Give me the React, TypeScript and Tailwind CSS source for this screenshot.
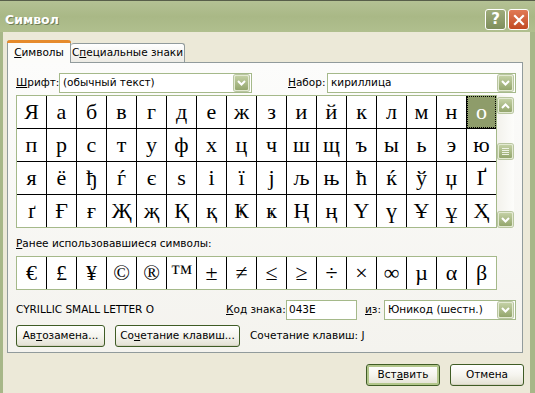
import React from "react";

const UI = "font-['DejaVu_Sans',sans-serif] text-[10.5px] text-black";
const SERIF = "font-['Liberation_Serif','DejaVu_Serif',serif]";

const rows: string[][] = [
  ["Я", "а", "б", "в", "г", "д", "е", "ж", "з", "и", "й", "к", "л", "м", "н", "о"],
  ["п", "р", "с", "т", "у", "ф", "х", "ц", "ч", "ш", "щ", "ъ", "ы", "ь", "э", "ю"],
  ["я", "ё", "ђ", "ѓ", "є", "ѕ", "і", "ї", "ј", "љ", "њ", "ћ", "ќ", "ў", "џ", "Ґ"],
  ["ґ", "Ғ", "ғ", "Җ", "җ", "Қ", "қ", "Ҝ", "ҝ", "Ң", "ң", "Ү", "ү", "Ұ", "ұ", "Ҳ"],
];

const recent = ["€", "£", "¥", "©", "®", "™", "±", "≠", "≤", "≥", "÷", "×", "∞", "µ", "α", "β"];

function Chevron({ up }: { up?: boolean }) {
  return (
    <svg width="9" height="6" viewBox="0 0 9 6">
      <path
        d={up ? "M1 5 L4.5 1.5 L8 5" : "M1 1 L4.5 4.5 L8 1"}
        fill="none"
        stroke="white"
        strokeWidth="2"
      />
    </svg>
  );
}

function GreenBtn({ up, w = 15, h = 16 }: { up?: boolean; w?: number; h?: number }) {
  return (
    <div
      className="rounded-[2px] border border-[#e3ead2] bg-linear-to-b from-[#c3d0a4] to-[#94a66d] flex items-center justify-center shadow-[0_0_0_1px_#b9c6a0]"
      style={{ width: w, height: h }}
    >
      <Chevron up={up} />
    </div>
  );
}

function Select({ text, w }: { text: string; w: number }) {
  return (
    <div
      className="h-[20px] border border-[#a5b98a] bg-white flex items-center pl-[3px] pr-[2px]"
      style={{ width: w }}
    >
      <span className="whitespace-nowrap">{text}</span>
      <div className="ml-auto">
        <GreenBtn />
      </div>
    </div>
  );
}

function XpButton({
  children,
  w,
  def,
}: {
  children: React.ReactNode;
  w: number;
  def?: boolean;
}) {
  return (
    <div
      className={
        "h-[22px] rounded-[3px] border border-[#3f5c25] bg-linear-to-b from-[#ffffff] via-[#f5f4ee] to-[#e3e1d3] flex items-center justify-center whitespace-nowrap " +
        (def ? "shadow-[inset_0_0_0_2px_#b3c78c]" : "shadow-[inset_0_-1px_0_#d6d3c2]")
      }
      style={{ width: w }}
    >
      {children}
    </div>
  );
}

export default function App() {
  return (
    <div className={"w-[535px] h-[393px] overflow-hidden flex flex-col bg-[#a7b788] " + UI}>
      {/* Title bar */}
      <div className="h-[32px] shrink-0 flex items-start border-t border-[#585e4a] bg-linear-to-b from-[#b4c194] via-[#a9b886] to-[#b0bf8e]">
        <div className="ml-[5px] mt-[12px] font-['DejaVu_Sans',sans-serif] font-bold text-[12.5px] leading-[14px] text-white [text-shadow:1px_1px_0_#6f7d55]">
          Символ
        </div>
        <div className="ml-auto mr-[6px] mt-[8px] flex gap-[2px]">
          <div className="w-[21px] h-[21px] rounded-[3px] border border-white bg-linear-to-b from-[#9fac7c] to-[#7f8e5c] flex items-center justify-center text-white font-bold text-[15px] font-['DejaVu_Sans',sans-serif] leading-none">
            ?
          </div>
          <div className="w-[21px] h-[21px] rounded-[3px] border border-white bg-linear-to-b from-[#e07a55] to-[#c24a22] flex items-center justify-center">
            <svg width="12" height="12" viewBox="0 0 12 12">
              <path d="M2 2 L10 10 M10 2 L2 10" stroke="white" strokeWidth="2.2" strokeLinecap="square" />
            </svg>
          </div>
        </div>
      </div>

      {/* Body */}
      <div className="flex-1 ml-[3px] mr-[5px] bg-[#ece9d8] flex flex-col">
        {/* Tabs */}
        <div className="mt-[8px] ml-[4px] flex items-end h-[22px]">
          <div className="relative z-10 w-[64px] h-[23px] -mb-px rounded-t-[3px] border-x border-[#919b9c] bg-[#fcfcfa] flex flex-col">
            <div className="h-[3px] -mx-px rounded-t-[3px] bg-[#e68b2c]" />
            <div className="flex-1 flex items-center justify-center pb-[1px]">
              <span>
                <span className="underline">С</span>имволы
              </span>
            </div>
          </div>
          <div className="w-[114px] h-[19px] rounded-t-[3px] border-t border-r border-[#919b9c] bg-linear-to-b from-[#ffffff] to-[#ecebe4] flex items-center justify-center">
            <span>
              С<span className="underline">п</span>ециальные знаки
            </span>
          </div>
        </div>

        {/* Panel */}
        <div className="ml-[4px] w-[516px] h-[291px] border border-[#919b9c] bg-linear-to-b from-[#fcfcfb] to-[#f4f3ee] flex flex-col pl-[8px]">
          {/* Font row */}
          <div className="mt-[10px] h-[20px] flex items-center">
            <span className="w-[43px]">
              <span className="underline">Ш</span>рифт:
            </span>
            <Select text="(обычный текст)" w={193} />
            <span className="ml-[36px] w-[39px]">
              <span className="underline">Н</span>абор:
            </span>
            <Select text="кириллица" w={189} />
          </div>

          {/* Grid + scrollbar */}
          <div className="mt-[2px] flex">
            <div className="border border-[#a5b98a] bg-black">
              <div className="grid grid-cols-16 gap-px">
                {rows.map((r, ri) =>
                  r.map((c, ci) => {
                    const sel = ri === 0 && ci === 15;
                    return (
                      <div
                        key={ri + "-" + ci}
                        className={
                          "w-[29px] h-[32px] flex items-center justify-center text-[22px] leading-none " +
                          SERIF +
                          (sel
                            ? " bg-[#8e9c6a] text-white outline-1 outline-dotted outline-black -outline-offset-1"
                            : " bg-white text-black")
                        }
                      >
                        {c}
                      </div>
                    );
                  })
                )}
              </div>
            </div>
            <div className="w-[17px] h-[133px] bg-linear-to-r from-[#f3f2ec] to-[#fdfdfb] flex flex-col items-center pt-[3px] pb-[1px]">
              <GreenBtn up w={15} h={15} />
              <div className="mt-[31px] w-[15px] h-[15px] rounded-[2px] border border-[#e3ead2] bg-linear-to-b from-[#c3d0a4] to-[#94a66d] flex flex-col items-center justify-center gap-[1px] shadow-[0_0_0_1px_#b9c6a0]">
                <div className="w-[7px] h-px bg-[#eef2e4]" />
                <div className="w-[7px] h-px bg-[#eef2e4]" />
                <div className="w-[7px] h-px bg-[#eef2e4]" />
                <div className="w-[7px] h-px bg-[#eef2e4]" />
              </div>
              <div className="mt-auto">
                <GreenBtn w={15} h={15} />
              </div>
            </div>
          </div>

          {/* Recent label */}
          <div className="mt-[9px] h-[13px] leading-[13px]">
            <span className="underline">Р</span>анее использовавшиеся символы:
          </div>

          {/* Recent box */}
          <div className="mt-[6px] self-start border border-[#a5b98a] bg-black">
            <div className="grid grid-cols-16 gap-px">
              {recent.map((c, i) => (
                <div
                  key={i}
                  className={
                    "w-[29px] h-[32px] flex items-center justify-center text-[22px] leading-none bg-white " +
                    SERIF
                  }
                >
                  {c}
                </div>
              ))}
            </div>
          </div>

          {/* Name / code row */}
          <div className="mt-[10px] h-[20px] flex items-center">
            <span className="w-[210px] whitespace-nowrap">CYRILLIC SMALL LETTER O</span>
            <span className="w-[60px] whitespace-nowrap">
              <span className="underline">К</span>од знака:
            </span>
            <div className="w-[71px] h-[20px] border border-[#a5b98a] bg-white flex items-center pl-[2px]">
              043E
            </div>
            <span className="ml-[8px] w-[19px]">
              <span className="underline">и</span>з:
            </span>
            <Select text="Юникод (шестн.)" w={132} />
          </div>

          {/* Buttons row */}
          <div className="mt-[5px] h-[22px] flex items-center">
            <XpButton w={89}>
              <span>
                Ав<span className="underline">т</span>озамена...
              </span>
            </XpButton>
            <div className="ml-[10px]">
              <XpButton w={125}>
                <span>
                  Со<span className="underline">ч</span>етание клавиш...
                </span>
              </XpButton>
            </div>
            <span className="ml-[10px]">Сочетание клавиш: J</span>
          </div>
        </div>

        {/* Bottom buttons */}
        <div className="mt-[11px] mr-[6px] flex justify-end gap-[10px]">
          <XpButton w={74} def>
            <span>
              Вст<span className="underline">а</span>вить
            </span>
          </XpButton>
          <XpButton w={74}>
            <span>Отмена</span>
          </XpButton>
        </div>
      </div>
    </div>
  );
}
